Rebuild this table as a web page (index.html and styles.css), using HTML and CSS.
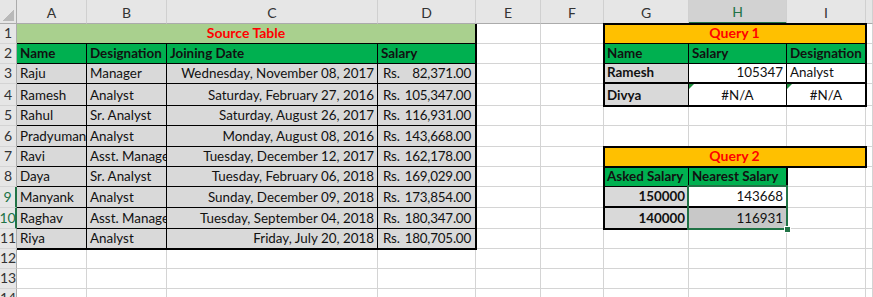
FILE: index.html
```html
<!DOCTYPE html>
<html>
<head>
<meta charset="utf-8">
<link rel="stylesheet" href="styles.css">
</head>
<body>
<div class="wrap">
<div class="sheet">
  <!-- header row -->
  <div class="c corner"><span class="tri"></span></div>
  <div class="c ch">A</div>
  <div class="c ch">B</div>
  <div class="c ch">C</div>
  <div class="c ch">D</div>
  <div class="c ch">E</div>
  <div class="c ch">F</div>
  <div class="c ch">G</div>
  <div class="c ch sel-h">H</div>
  <div class="c ch">I</div>
  <div class="c ch"></div>

  <!-- row 1 -->
  <div class="c rh">1</div>
  <div class="c k title green-l span4">Source Table</div>
  <div class="c"></div>
  <div class="c"></div>
  <div class="c k title orange span3">Query 1</div>
  <div class="c"></div>

  <!-- row 2 -->
  <div class="c rh">2</div>
  <div class="c k hd">Name</div>
  <div class="c k hd">Designation</div>
  <div class="c k hd">Joining Date</div>
  <div class="c k hd">Salary</div>
  <div class="c"></div>
  <div class="c"></div>
  <div class="c k hd">Name</div>
  <div class="c k hd">Salary</div>
  <div class="c k hd">Designation</div>
  <div class="c"></div>

  <!-- row 3 -->
  <div class="c rh">3</div>
  <div class="c k g">Raju</div>
  <div class="c k g">Manager</div>
  <div class="c k g r">Wednesday, November 08, 2017</div>
  <div class="c k g sal"><span>Rs.</span><span>82,371.00</span></div>
  <div class="c"></div>
  <div class="c"></div>
  <div class="c k g b tb">Ramesh</div>
  <div class="c k r tb">105347</div>
  <div class="c k tb">Analyst</div>
  <div class="c"></div>

  <!-- row 4 -->
  <div class="c rh">4</div>
  <div class="c k g">Ramesh</div>
  <div class="c k g">Analyst</div>
  <div class="c k g r">Saturday, February 27, 2016</div>
  <div class="c k g sal"><span>Rs.</span><span>105,347.00</span></div>
  <div class="c"></div>
  <div class="c"></div>
  <div class="c k g b">Divya</div>
  <div class="c k ctr err">#N/A</div>
  <div class="c k ctr err">#N/A</div>
  <div class="c"></div>

  <!-- row 5 -->
  <div class="c rh">5</div>
  <div class="c k g">Rahul</div>
  <div class="c k g">Sr. Analyst</div>
  <div class="c k g r">Saturday, August 26, 2017</div>
  <div class="c k g sal"><span>Rs.</span><span>116,931.00</span></div>
  <div class="c"></div>
  <div class="c"></div>
  <div class="c"></div>
  <div class="c"></div>
  <div class="c"></div>
  <div class="c"></div>

  <!-- row 6 -->
  <div class="c rh">6</div>
  <div class="c k g">Pradyuman</div>
  <div class="c k g">Analyst</div>
  <div class="c k g r">Monday, August 08, 2016</div>
  <div class="c k g sal"><span>Rs.</span><span>143,668.00</span></div>
  <div class="c"></div>
  <div class="c"></div>
  <div class="c"></div>
  <div class="c"></div>
  <div class="c"></div>
  <div class="c"></div>

  <!-- row 7 -->
  <div class="c rh">7</div>
  <div class="c k g">Ravi</div>
  <div class="c k g">Asst. Manager</div>
  <div class="c k g r">Tuesday, December 12, 2017</div>
  <div class="c k g sal"><span>Rs.</span><span>162,178.00</span></div>
  <div class="c"></div>
  <div class="c"></div>
  <div class="c k title orange span3">Query 2</div>
  <div class="c"></div>

  <!-- row 8 -->
  <div class="c rh">8</div>
  <div class="c k g">Daya</div>
  <div class="c k g">Sr. Analyst</div>
  <div class="c k g r">Tuesday, February 06, 2018</div>
  <div class="c k g sal"><span>Rs.</span><span>169,029.00</span></div>
  <div class="c"></div>
  <div class="c"></div>
  <div class="c k hd">Asked Salary</div>
  <div class="c k hd">Nearest Salary</div>
  <div class="c"></div>
  <div class="c"></div>

  <!-- row 9 -->
  <div class="c rh sel-r">9</div>
  <div class="c k g">Manyank</div>
  <div class="c k g">Analyst</div>
  <div class="c k g r">Sunday, December 09, 2018</div>
  <div class="c k g sal"><span>Rs.</span><span>173,854.00</span></div>
  <div class="c"></div>
  <div class="c"></div>
  <div class="c k g b r tb">150000</div>
  <div class="c k r tb">143668</div>
  <div class="c"></div>
  <div class="c"></div>

  <!-- row 10 -->
  <div class="c rh sel-r">10</div>
  <div class="c k g">Raghav</div>
  <div class="c k g">Asst. Manager</div>
  <div class="c k g r">Tuesday, September 04, 2018</div>
  <div class="c k g sal"><span>Rs.</span><span>180,347.00</span></div>
  <div class="c"></div>
  <div class="c"></div>
  <div class="c k g b r">140000</div>
  <div class="c k r shade">116931</div>
  <div class="c"></div>
  <div class="c"></div>

  <!-- row 11 -->
  <div class="c rh">11</div>
  <div class="c k g">Riya</div>
  <div class="c k g">Analyst</div>
  <div class="c k g r">Friday, July 20, 2018</div>
  <div class="c k g sal"><span>Rs.</span><span>180,705.00</span></div>
  <div class="c"></div>
  <div class="c"></div>
  <div class="c"></div>
  <div class="c"></div>
  <div class="c"></div>
  <div class="c"></div>

  <!-- rows 12-14 -->
  <div class="c rh">12</div>
  <div class="c"></div><div class="c"></div><div class="c"></div><div class="c"></div><div class="c"></div>
  <div class="c"></div><div class="c"></div><div class="c"></div><div class="c"></div><div class="c"></div>
  <div class="c rh">13</div>
  <div class="c"></div><div class="c"></div><div class="c"></div><div class="c"></div><div class="c"></div>
  <div class="c"></div><div class="c"></div><div class="c"></div><div class="c"></div><div class="c"></div>
  <div class="c rh">14</div>
  <div class="c"></div><div class="c"></div><div class="c"></div><div class="c"></div><div class="c"></div>
  <div class="c"></div><div class="c"></div><div class="c"></div><div class="c"></div><div class="c"></div>
</div>

<div class="overlay">
  <div class="frame f-src"></div>
  <div class="frame f-q1"></div>
  <div class="frame f-q2t"></div>
  <div class="frame f-q2b"></div>
  <div class="selbox"><span class="handle"></span></div>
</div>
</div>
</body>
</html>
```

FILE: styles.css
```css
* { box-sizing: border-box; margin: 0; padding: 0; }
body {
  margin: 0;
  overflow: hidden;
  background: #fff;
  font-family: "Lato", "Liberation Sans", sans-serif;
  font-size: 13.4px;
  color: #111;
}
.wrap {
  display: grid;
  width: 873px;
  height: 297px;
  overflow: hidden;
}
.sheet, .overlay {
  grid-area: 1 / 1;
  display: grid;
  grid-template-columns: 17px 70px 80px 211px 98px 65px 63px 85px 98px 79px 1fr;
  grid-template-rows: 24px 20px 20px 20px 22px 20px 21px 20px 20px 21px 21px 20px 20px 20px 20px;
  width: 873px;
}
.overlay {
  pointer-events: none;
  z-index: 2;
}
.c {
  position: relative;
  border-right: 1px solid #d4d4d4;
  border-bottom: 1px solid #d4d4d4;
  overflow: hidden;
  white-space: nowrap;
  display: flex;
  align-items: flex-end;
  padding: 0 3px 1px 3px;
  line-height: 18px;
  min-width: 0;
}
.corner {
  background: #e6e6e6;
  border-right: 1px solid #ababab;
  border-bottom: 1px solid #ababab;
  padding: 0;
  justify-content: flex-end;
}
.tri {
  width: 11px;
  height: 11px;
  margin: 0 2px 2px 0;
  background: linear-gradient(135deg, transparent 50%, #b9b9b9 50%);
}
.ch {
  background: #e6e6e6;
  border-right: 1px solid #d0d0d0;
  border-bottom: 1px solid #ababab;
  justify-content: center;
  align-items: center;
  padding: 2px 0 0 0;
  color: #333;
  font-size: 14px;
}
.sel-h {
  background: #d2d2d2;
  color: #217346;
  border-bottom: 2px solid #217346;
}
.rh {
  background: #e6e6e6;
  border-right: 1px solid #ababab;
  border-bottom: 1px solid #d4d4d4;
  justify-content: center;
  padding: 0 0 1px 0;
  color: #333;
  font-size: 14px;
}
.sel-r {
  color: #217346;
  border-right: 2px solid #217346;
}
.k { border-right-color: #000; border-bottom-color: #000; }
.tb { border-bottom: 2px solid #000; }
.g { background: #d9d9d9; }
.b { font-weight: 700; }
.r { justify-content: flex-end; }
.ctr { justify-content: center; }
.hd { background: #00b050; font-weight: 700; }
.title { justify-content: center; color: #ff0000; font-weight: 700; font-size: 14px; }
.green-l { background: #a9d08e; }
.orange { background: #ffc000; }
.span4 { grid-column: span 4; }
.span3 { grid-column: span 3; }
.sal { justify-content: space-between; padding: 0 4px 1px 5px; letter-spacing: -0.2px; }
.shade { background: #c8c8c8; }
.err::before {
  content: "";
  position: absolute;
  left: 0;
  top: 0;
  border-top: 5px solid #1e8e3e;
  border-right: 5px solid transparent;
}
.frame {
  margin: -1px;
  border: 2px solid #000;
}
.f-src {
  grid-column: 2 / 6;
  grid-row: 2 / 13;
  border-top: none;
  border-left: none;
  margin-top: 0;
  margin-left: 0;
}
.f-q1 { grid-column: 8 / 11; grid-row: 2 / 6; }
.f-q2t { grid-column: 8 / 11; grid-row: 8 / 9; }
.f-q2b { grid-column: 8 / 10; grid-row: 9 / 12; }
.selbox {
  grid-column: 9 / 10;
  grid-row: 10 / 12;
  margin: -2px -1px -1px -2px;
  border: 2px solid #217346;
  position: relative;
}
.handle {
  position: absolute;
  right: -5px;
  bottom: -5px;
  width: 7px;
  height: 7px;
  background: #217346;
  border: 1px solid #fff;
}
```
